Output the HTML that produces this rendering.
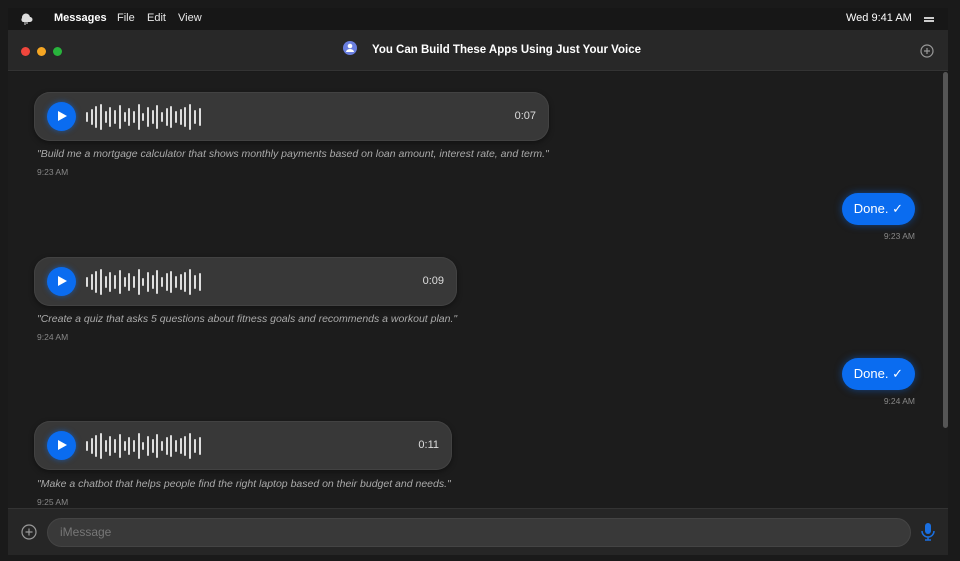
<!DOCTYPE html><html><head><style>
*{margin:0;padding:0;box-sizing:border-box}
body{width:960px;height:561px;background:#1a1a1a;font-family:"Liberation Sans",sans-serif;position:relative;overflow:hidden}
.abs{position:absolute}
.menu{left:8px;top:8px;width:940px;height:22px;background:#171717;color:#e8e8e8;font-size:11px}
.title{left:8px;top:30px;width:940px;height:41px;background:#282828;border-bottom:1px solid #333}
.content{left:8px;top:72px;width:940px;height:436px;background:#1c1c1c}
.inp{left:8px;top:508px;width:940px;height:47px;background:#262626;border-top:1px solid #333}
.dot{width:9px;height:9px;border-radius:50%;top:47px}
.bub{background:#383838;border-radius:16px;height:49px;left:34px;box-shadow:0 0 0 1px #424242 inset,0 2px 6px rgba(0,0,0,.4)}
.play{position:absolute;left:13px;top:10px;width:29px;height:29px;border-radius:50%;background:#0a6cf0;box-shadow:0 0 6px rgba(10,108,240,.6)}
.play:after{content:"";position:absolute;left:11px;top:9px;border-left:9px solid #fff;border-top:5.5px solid transparent;border-bottom:5.5px solid transparent}
.wave{position:absolute;left:52px;top:0;height:49px;display:flex;align-items:center;gap:2.7px}
.wave i{display:block;width:2px;background:#ddd;border-radius:1px}
.dur{position:absolute;right:13px;top:18px;color:#ddd;font-size:11px}
.q{left:37px;font-size:10.5px;font-style:italic;color:#aaa}
.t{font-size:8.5px;color:#888}
.done{background:#0a6cf0;color:#fff;font-size:13px;border-radius:16px;height:32px;line-height:32px;padding:0 12px;right:45px;box-shadow:0 0 8px rgba(10,108,240,.5)}
</style></head><body>
<div class="abs menu">
<svg class="abs" style="left:11px;top:4px" width="14" height="13" viewBox="0 0 14 13"><path d="M3 6a4 4 0 0 1 8-1 2.5 2.5 0 0 1 0 5H4a2.5 2.5 0 0 1-1-4z" fill="#ddd"/><path d="M6 10v3M8 10v2" stroke="#ddd"/></svg>
<span class="abs" style="left:46px;top:4px;font-weight:bold;color:#fff">Messages</span>
<span class="abs" style="left:109px;top:4px">File</span>
<span class="abs" style="left:139px;top:4px">Edit</span>
<span class="abs" style="left:170px;top:4px">View</span>
<span class="abs" style="left:838px;top:4px;color:#fff">Wed 9:41 AM</span>
<div class="abs" style="left:916px;top:9px;width:10px;height:1.5px;background:#ccc"></div>
<div class="abs" style="left:916px;top:12px;width:10px;height:1.5px;background:#ccc"></div>
</div>
<div class="abs title"></div>
<div class="abs dot" style="left:21px;background:#f0463c"></div>
<div class="abs dot" style="left:37px;background:#f5a623"></div>
<div class="abs dot" style="left:53px;background:#28b43c"></div>
<svg class="abs" style="left:343px;top:41px" width="14" height="14" viewBox="0 0 14 14"><circle cx="7" cy="7" r="7" fill="#6a7fe0"/><circle cx="7" cy="5" r="2.3" fill="#fff"/><path d="M3 11a4 3 0 0 1 8 0z" fill="#fff"/></svg>
<div class="abs" style="left:372px;top:44px;color:#fff;font-weight:bold;font-size:11.5px">You Can Build These Apps Using Just Your Voice</div>
<svg class="abs" style="left:920px;top:44px" width="14" height="14" viewBox="0 0 14 14"><circle cx="7" cy="7" r="6" fill="none" stroke="#999" stroke-width="1.2"/><path d="M7 4v6M4 7h6" stroke="#999" stroke-width="1.2"/></svg>
<div class="abs content"></div>
<div class="abs" style="left:943px;top:72px;width:5px;height:356px;background:#555;border-radius:3px"></div>

<div class="abs bub" style="top:92px;width:515px"><div class="play"></div><div class="wave" id="w1"></div><div class="dur">0:07</div></div>
<div class="abs q" style="top:148px">"Build me a mortgage calculator that shows monthly payments based on loan amount, interest rate, and term."</div>
<div class="abs t" style="left:37px;top:167px">9:23 AM</div>
<div class="abs done" style="top:193px">Done. ✓</div>
<div class="abs t" style="right:45px;top:231px">9:23 AM</div>

<div class="abs bub" style="top:257px;width:423px"><div class="play"></div><div class="wave" id="w2"></div><div class="dur">0:09</div></div>
<div class="abs q" style="top:313px">"Create a quiz that asks 5 questions about fitness goals and recommends a workout plan."</div>
<div class="abs t" style="left:37px;top:332px">9:24 AM</div>
<div class="abs done" style="top:358px">Done. ✓</div>
<div class="abs t" style="right:45px;top:396px">9:24 AM</div>

<div class="abs bub" style="top:421px;width:418px"><div class="play"></div><div class="wave" id="w3"></div><div class="dur">0:11</div></div>
<div class="abs q" style="top:478px">"Make a chatbot that helps people find the right laptop based on their budget and needs."</div>
<div class="abs t" style="left:37px;top:497px">9:25 AM</div>

<div class="abs inp"></div>
<svg class="abs" style="left:21px;top:524px" width="16" height="16" viewBox="0 0 16 16"><circle cx="8" cy="8" r="7" fill="none" stroke="#999" stroke-width="1.2"/><path d="M8 4.5v7M4.5 8h7" stroke="#999" stroke-width="1.2"/></svg>
<div class="abs" style="left:47px;top:518px;width:864px;height:29px;border-radius:15px;background:#393939;border:1px solid #444"></div>
<div class="abs" style="left:60px;top:525px;color:#777;font-size:12px">iMessage</div>
<svg class="abs" style="left:920px;top:522px" width="16" height="20" viewBox="0 0 16 20"><rect x="5" y="1" width="6" height="11" rx="3" fill="#1a6fe0"/><path d="M2 9a6 6 0 0 0 12 0M8 15v3M5 18h6" fill="none" stroke="#1a6fe0" stroke-width="1.5"/></svg>
<script>
var h=[10,16,22,26,12,20,14,24,10,18,12,26,8,20,14,24,10,18,22,12,16,20,26,14,18];
['w1','w2','w3'].forEach(function(id){var w=document.getElementById(id);h.forEach(function(v){var i=document.createElement('i');i.style.height=v+'px';w.appendChild(i);});});
</script>
</body></html>
